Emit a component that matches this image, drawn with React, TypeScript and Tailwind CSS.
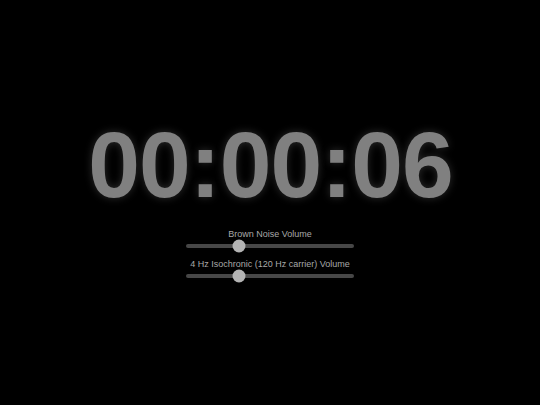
import React from "react";

function Slider({ label, value }: { label: string; value: number }) {
  return (
    <div className="flex flex-col items-center">
      <div className="text-[9px] leading-[12px] text-[#a8a8a8]">{label}</div>
      <div className="relative mt-[4px] h-[4px] w-[168px] rounded-full bg-[#474747]">
        <div
          className="absolute top-1/2 h-[13px] w-[13px] -translate-x-1/2 -translate-y-1/2 rounded-full bg-[#b3b3b3]"
          style={{ left: `${6 + value * 156}px` }}
        />
      </div>
    </div>
  );
}

export default function App() {
  return (
    <div
      className="flex h-[405px] w-[540px] flex-col items-center bg-black pt-[119px]"
      style={{ fontFamily: '"Liberation Sans", Arial, sans-serif' }}
    >
      <div className="pl-[1px] text-[93px] font-bold leading-[93px] tracking-[-1px] text-[#808080] [text-shadow:0_0_8px_rgba(128,128,128,0.35)]">
        00:00:06
      </div>
      <div className="mt-[16px] flex flex-col items-center gap-[10px]">
        <Slider label="Brown Noise Volume" value={0.3} />
        <Slider label="4 Hz Isochronic (120 Hz carrier) Volume" value={0.3} />
      </div>
    </div>
  );
}
